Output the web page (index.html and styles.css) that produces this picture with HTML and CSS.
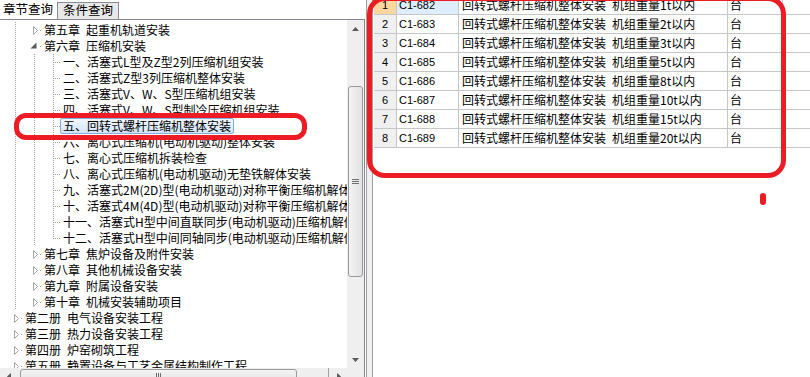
FILE: index.html
```html
<!DOCTYPE html>
<html lang="zh-CN">
<head>
  <meta charset="UTF-8">
  <title>章节查询</title>
  <link rel="stylesheet" href="styles.css">
</head>
<body>
  <!-- shared tree glyphs -->
  <svg class="defs" width="0" height="0">
    <symbol id="tri-c" viewBox="0 0 16 16"><path d="M8.5 4.5 L12.5 8.5 L8.5 12.5 Z" fill="#fff" stroke="#a6a6a6"/></symbol>
    <symbol id="tri-o" viewBox="0 0 16 16"><path d="M11.5 4.5 L11.5 10.5 L5.5 10.5 Z" fill="#595959"/></symbol>
  </svg>

  <!-- Left: chapter tree -->
  <div class="left">
    <div class="tabs">
      <span class="tab active">章节查询</span>
      <span class="tab">条件查询</span>
    </div>
    <div class="treebox">
      <div class="view">
        <div class="row"><span class="g line"></span><span class="exp"><svg><use href="#tri-c"/></svg></span><span class="label">第五章&ensp;起重机轨道安装</span></div>
        <div class="row"><span class="g line"></span><span class="exp"><svg><use href="#tri-o"/></svg></span><span class="label">第六章&ensp;压缩机安装</span></div>
        <div class="row"><span class="g line"></span><span class="g line"></span><span class="leaf"></span><span class="label">一、活塞式L型及Z型2列压缩机组安装</span></div>
        <div class="row"><span class="g line"></span><span class="g line"></span><span class="leaf"></span><span class="label">二、活塞式Z型3列压缩机整体安装</span></div>
        <div class="row"><span class="g line"></span><span class="g line"></span><span class="leaf"></span><span class="label">三、活塞式V、W、S型压缩机组安装</span></div>
        <div class="row"><span class="g line"></span><span class="g line"></span><span class="leaf"></span><span class="label">四、活塞式V、W、S型制冷压缩机组安装</span></div>
        <div class="row"><span class="g line"></span><span class="g line"></span><span class="leaf"></span><span class="label sel">五、回转式螺杆压缩机整体安装</span></div>
        <div class="row"><span class="g line"></span><span class="g line"></span><span class="leaf"></span><span class="label">六、离心式压缩机(电动机驱动)整体安装</span></div>
        <div class="row"><span class="g line"></span><span class="g line"></span><span class="leaf"></span><span class="label">七、离心式压缩机拆装检查</span></div>
        <div class="row"><span class="g line"></span><span class="g line"></span><span class="leaf"></span><span class="label">八、离心式压缩机(电动机驱动)无垫铁解体安装</span></div>
        <div class="row"><span class="g line"></span><span class="g line"></span><span class="leaf"></span><span class="label">九、活塞式2M(2D)型(电动机驱动)对称平衡压缩机解体安装</span></div>
        <div class="row"><span class="g line"></span><span class="g line"></span><span class="leaf"></span><span class="label">十、活塞式4M(4D)型(电动机驱动)对称平衡压缩机解体安装</span></div>
        <div class="row"><span class="g line"></span><span class="g line"></span><span class="leaf"></span><span class="label">十一、活塞式H型中间直联同步(电动机驱动)压缩机解体安装</span></div>
        <div class="row"><span class="g line"></span><span class="g line"></span><span class="leaf last"></span><span class="label">十二、活塞式H型中间同轴同步(电动机驱动)压缩机解体安装</span></div>
        <div class="row"><span class="g line"></span><span class="exp"><svg><use href="#tri-c"/></svg></span><span class="label">第七章&ensp;焦炉设备及附件安装</span></div>
        <div class="row"><span class="g line"></span><span class="exp"><svg><use href="#tri-c"/></svg></span><span class="label">第八章&ensp;其他机械设备安装</span></div>
        <div class="row"><span class="g line"></span><span class="exp"><svg><use href="#tri-c"/></svg></span><span class="label">第九章&ensp;附属设备安装</span></div>
        <div class="row"><span class="g line"></span><span class="exp"><svg><use href="#tri-c"/></svg></span><span class="label">第十章&ensp;机械安装辅助项目</span></div>
        <div class="row"><span class="exp"><svg><use href="#tri-c"/></svg></span><span class="label">第二册&ensp;电气设备安装工程</span></div>
        <div class="row"><span class="exp"><svg><use href="#tri-c"/></svg></span><span class="label">第三册&ensp;热力设备安装工程</span></div>
        <div class="row"><span class="exp"><svg><use href="#tri-c"/></svg></span><span class="label">第四册&ensp;炉窑砌筑工程</span></div>
        <div class="row"><span class="exp"><svg><use href="#tri-c"/></svg></span><span class="label">第五册&ensp;静置设备与工艺金属结构制作工程</span></div>
      </div>

      <div class="vscroll">
        <span class="sbtn"><svg width="7" height="4"><path d="M0 4 L3.5 0 L7 4 Z" fill="#5a5a5a"/></svg></span>
        <span class="thumb v"><i></i><i></i><i></i></span>
        <span class="sbtn down"><svg width="7" height="4"><path d="M0 0 L3.5 4 L7 0 Z" fill="#5a5a5a"/></svg></span>
      </div>
      <div class="hscroll">
        <span class="sbtn"><svg width="4" height="7"><path d="M4 0 L0 3.5 L4 7 Z" fill="#5a5a5a"/></svg></span>
        <span class="thumb h"><i></i><i></i><i></i></span>
        <span class="sbtn right"><svg width="4" height="7"><path d="M0 0 L4 3.5 L0 7 Z" fill="#5a5a5a"/></svg></span>
      </div>
      <div class="corner"></div>
    </div>
  </div>

  <div class="splitter"></div>

  <!-- Right: quota list -->
  <div class="right">
    <div class="grid">
      <div class="grow"><span class="num cur">1</span><span class="code cur">C1-682</span><span class="name">回转式螺杆压缩机整体安装&ensp;机组重量1t以内</span><span class="unit">台</span><span class="fill"></span></div>
      <div class="grow"><span class="num">2</span><span class="code">C1-683</span><span class="name">回转式螺杆压缩机整体安装&ensp;机组重量2t以内</span><span class="unit">台</span><span class="fill"></span></div>
      <div class="grow"><span class="num">3</span><span class="code">C1-684</span><span class="name">回转式螺杆压缩机整体安装&ensp;机组重量3t以内</span><span class="unit">台</span><span class="fill"></span></div>
      <div class="grow"><span class="num">4</span><span class="code">C1-685</span><span class="name">回转式螺杆压缩机整体安装&ensp;机组重量5t以内</span><span class="unit">台</span><span class="fill"></span></div>
      <div class="grow"><span class="num">5</span><span class="code">C1-686</span><span class="name">回转式螺杆压缩机整体安装&ensp;机组重量8t以内</span><span class="unit">台</span><span class="fill"></span></div>
      <div class="grow"><span class="num">6</span><span class="code">C1-687</span><span class="name">回转式螺杆压缩机整体安装&ensp;机组重量10t以内</span><span class="unit">台</span><span class="fill"></span></div>
      <div class="grow"><span class="num">7</span><span class="code">C1-688</span><span class="name">回转式螺杆压缩机整体安装&ensp;机组重量15t以内</span><span class="unit">台</span><span class="fill"></span></div>
      <div class="grow"><span class="num">8</span><span class="code">C1-689</span><span class="name">回转式螺杆压缩机整体安装&ensp;机组重量20t以内</span><span class="unit">台</span><span class="fill"></span></div>
    </div>
  </div>

  <!-- hand-drawn red marks on top -->
  <div class="mark mark-item"></div>
  <div class="mark mark-grid"></div>
  <div class="mark-dot"></div>
</body>
</html>
```

FILE: styles.css
```css
/* Layout */
body {
  margin: 0;
  width: 810px;
  height: 377px;
  overflow: hidden;
  position: relative;
  display: flex;
  background: #fff;
  color: #000;
  font-family: "Noto Sans CJK SC", "Liberation Sans", sans-serif;
  font-size: 12px;
}
.defs {
  display: none;
}
.left {
  width: 366px;
  flex: none;
  border-right: 1px solid #a0a0a0;
  display: flex;
  flex-direction: column;
}
.splitter {
  width: 5px;
  flex: none;
  background: #f0f0f0;
}
.right {
  flex: 1;
  border-left: 1px solid #a0a0a0;
  padding-left: 1px;
  overflow: hidden;
}

/* Tabs */
.tabs {
  height: 19px;
  display: flex;
  align-items: flex-start;
  flex: none;
}
.tab {
  box-sizing: border-box;
  height: 17px;
  margin-top: 2px;
  padding: 0 5px 0 5px;
  font-size: 12.5px;
  line-height: 14px;
  border: 1px solid #898c95;
  border-bottom: 0;
  background: #e8e8e8;
}
.tab.active {
  width: 57px;
  height: 19px;
  margin-top: 0;
  padding: 0 0 0 3px;
  line-height: 18px;
  border: 0;
  background: #fff;
}

/* Tree */
.treebox {
  width: 365px;
  box-sizing: border-box;
  flex: none;
  border-top: 1px solid #828790;
  border-right: 1px solid #828790;
  display: grid;
  grid-template-columns: 347px 17px;
  grid-template-rows: 348px 17px;
}
.view {
  overflow: hidden;
  padding-top: 2px;
  box-sizing: border-box;
}
.row {
  height: 16px;
  display: flex;
  padding-left: 6px;
  white-space: nowrap;
}
.g {
  width: 19px;
  flex: none;
}
.g.line {
  background: repeating-linear-gradient(to bottom, #a0a0a0 0 1px, transparent 1px 2px) 9px 0 / 1px 100% no-repeat;
}
.exp {
  width: 16px;
  flex: none;
  background: linear-gradient(#a0a0a0, #a0a0a0) 15px 8px / 1px 1px no-repeat;
}
.exp svg {
  display: block;
  width: 16px;
  height: 16px;
}
.leaf {
  width: 16px;
  flex: none;
  background:
    repeating-linear-gradient(to bottom, #a0a0a0 0 1px, transparent 1px 2px) 9px 0 / 1px 100% no-repeat,
    repeating-linear-gradient(to right, #a0a0a0 0 1px, transparent 1px 2px) 9px 8px / 7px 1px no-repeat;
}
.leaf.last {
  background:
    repeating-linear-gradient(to bottom, #a0a0a0 0 1px, transparent 1px 2px) 9px 0 / 1px 9px no-repeat,
    repeating-linear-gradient(to right, #a0a0a0 0 1px, transparent 1px 2px) 9px 8px / 7px 1px no-repeat;
}
.label {
  height: 14px;
  line-height: 14px;
  padding: 0 2px;
  border: 1px solid transparent;
}
.label.sel {
  border-color: #84acdd;
  border-radius: 2px;
  background: linear-gradient(#f1f7fe, #d3e5fb);
}

/* Scrollbars */
.vscroll {
  background: #efefef;
  display: flex;
  flex-direction: column;
}
.hscroll {
  background: #efefef;
  display: flex;
}
.corner {
  background: #efefef;
}
.sbtn {
  width: 17px;
  height: 17px;
  flex: none;
  display: flex;
  align-items: center;
  justify-content: center;
}
.sbtn.down {
  margin-top: auto;
}
.sbtn.right {
  margin-left: auto;
}
.thumb {
  box-sizing: border-box;
  border: 1px solid #9a9a9a;
  border-radius: 3px;
  display: flex;
  align-items: center;
  justify-content: center;
  flex: none;
}
.thumb.v {
  margin: 49px 1px 0;
  height: 191px;
  flex-direction: column;
  gap: 1px;
  background: linear-gradient(to right, #f4f4f4, #e2e2e2);
}
.thumb.v i {
  width: 7px;
  height: 1px;
  background: #6e6e6e;
}
.thumb.h {
  margin: 1px 0 0 3px;
  width: 277px;
  height: 15px;
  gap: 1px;
  background: linear-gradient(#f4f4f4, #e2e2e2);
}
.thumb.h i {
  width: 1px;
  height: 7px;
  background: #6e6e6e;
}

/* Grid */
.grid {
  margin-top: -4px;
}
.grow {
  display: grid;
  grid-template-columns: 23px 62px 269px 55px 1fr;
  height: 19px;
}
.grow span {
  box-sizing: border-box;
  border-right: 1px solid #c6c6c6;
  border-bottom: 1px solid #c6c6c6;
  line-height: 18px;
  white-space: nowrap;
  overflow: hidden;
}
.num {
  background: #f0f0f0;
  text-align: center;
  font-family: "Liberation Sans", sans-serif;
  font-size: 11px;
}
.num.cur {
  background: #fcd69c;
}
.code {
  padding-left: 2px;
  font-family: "Liberation Sans", sans-serif;
  font-size: 11px;
}
.code.cur {
  background: #deedfd;
}
.name {
  padding-left: 3px;
}
.unit {
  padding-left: 2px;
}
.grow .fill {
  border-right: 0;
}

/* Red pen marks */
.mark {
  position: absolute;
  box-sizing: border-box;
  border: 5px solid #ed1c24;
}
.mark-item {
  left: 14px;
  top: 113px;
  width: 293px;
  height: 27px;
  border-radius: 12px;
}
.mark-grid {
  left: 367px;
  top: -4px;
  width: 419px;
  height: 182px;
  border-radius: 18px;
}
.mark-dot {
  position: absolute;
  left: 760px;
  top: 193px;
  width: 6px;
  height: 12px;
  border-radius: 3px;
  background: #ed1c24;
}
```
